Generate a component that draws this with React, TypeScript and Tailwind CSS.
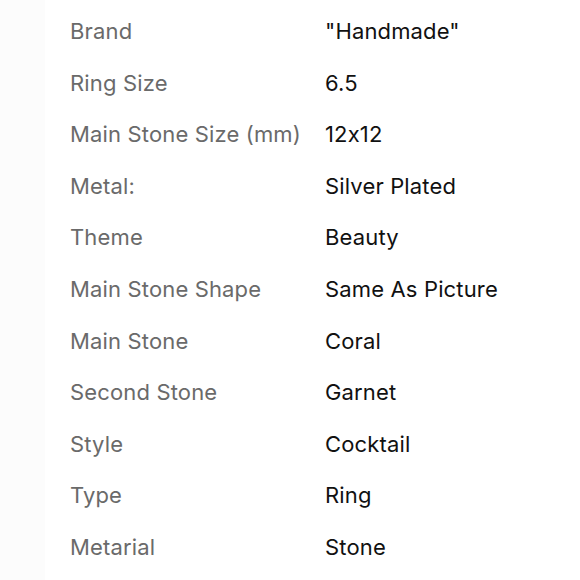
const rows: [string, string][] = [
  ['Brand', '"Handmade"'],
  ['Ring Size', '6.5'],
  ['Main Stone Size (mm)', '12x12'],
  ['Metal:', 'Silver Plated'],
  ['Theme', 'Beauty'],
  ['Main Stone Shape', 'Same As Picture'],
  ['Main Stone', 'Coral'],
  ['Second Stone', 'Garnet'],
  ['Style', 'Cocktail'],
  ['Type', 'Ring'],
  ['Metarial', 'Stone'],
];

export default function App() {
  return (
    <div className="flex h-[580px] w-[580px] overflow-hidden bg-white font-['Inter',sans-serif]">
      <div className="w-[45px] shrink-0 bg-[#fcfcfc]" />
      <dl className="grid flex-1 grid-cols-[255px_1fr] content-start pl-[25px] pt-[13px] text-[22px] leading-[36px] tracking-[0.15px]">
        {rows.map(([label, value]) => (
          <div key={label} className="contents">
            <dt className="mb-[15.6px] text-[#6a6a6a]">{label}</dt>
            <dd className="mb-[15.6px] text-[#111111]">{value}</dd>
          </div>
        ))}
      </dl>
    </div>
  );
}
